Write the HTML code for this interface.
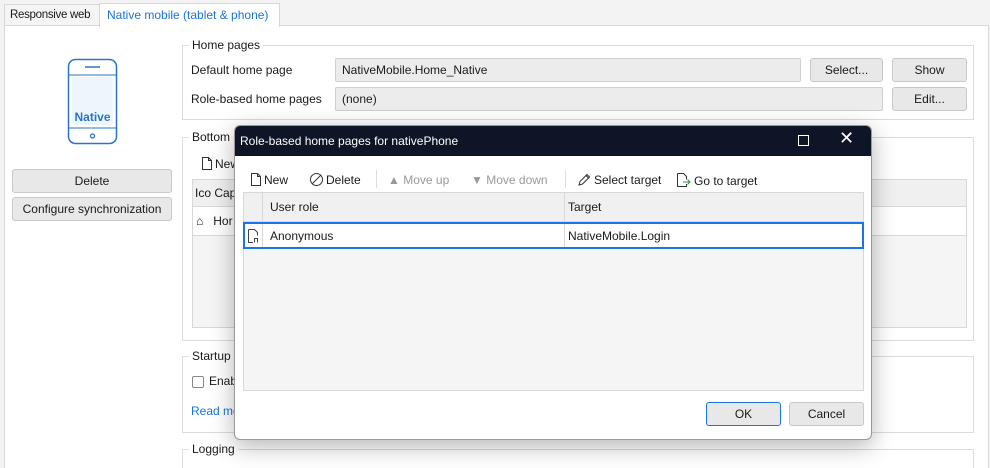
<!DOCTYPE html>
<html><head><style>
*{box-sizing:border-box;margin:0;padding:0}
html{width:990px;height:468px;overflow:hidden}
body{width:990px;height:468px;overflow:hidden;background:#f3f3f3;font-family:"Liberation Sans",sans-serif;font-size:12px;color:#1a1a1a;position:relative}
.a{position:absolute;white-space:nowrap}
.btn{position:absolute;background:#e8e8e8;border:1px solid #c8c8c8;border-radius:3px;text-align:center;line-height:22px;font-size:12px}
.inp{position:absolute;background:#ececec;border:1px solid #cfcfcf;border-radius:2px;padding-left:6px;line-height:22px}
.grp{position:absolute;border:1px solid #dcdcdc}
.gl{position:absolute;background:#fff;padding:0 3px;top:-8px;left:6px;line-height:14px;white-space:nowrap}
.g{color:#999}
svg.i{vertical-align:-2px;margin-right:3px}
</style></head><body>
<div class="a" style="left:4px;top:4px;width:96px;height:22px;background:#f5f5f5;border:1px solid #d8d8d8;line-height:20px;padding-left:5px;font-size:11.5px;letter-spacing:-0.3px">Responsive web</div>
<div class="a" style="left:4px;top:25px;width:985px;height:450px;background:#fff;border:1px solid #d8d8d8"></div>
<div class="a" style="left:99px;top:3px;width:181px;height:24px;background:#fff;border:1px solid #d8d8d8;border-bottom:none;line-height:22px;padding-left:7px;color:#1a73d9;font-size:12px">Native mobile (tablet &amp; phone)</div>
<svg class="a" style="left:67px;top:58px" width="52" height="88" viewBox="0 0 52 88"><rect x="1.5" y="1.5" width="48" height="84" rx="7" fill="#fff" stroke="#2a74c9" stroke-width="1.5"/><rect x="5" y="19" width="41" height="48" rx="2" fill="#eef6fd"/><line x1="1.5" y1="17" x2="49.5" y2="17" stroke="#2a74c9"/><line x1="1.5" y1="70" x2="49.5" y2="70" stroke="#2a74c9"/><line x1="18" y1="9" x2="33" y2="9" stroke="#2a74c9" stroke-width="1.5"/><circle cx="25.5" cy="78" r="2" fill="none" stroke="#2a74c9" stroke-width="1.3"/><text x="25.5" y="63" text-anchor="middle" font-family="Liberation Sans,sans-serif" font-size="12" font-weight="bold" fill="#2a74c9">Native</text></svg>
<div class="btn" style="left:12px;top:169px;width:160px;height:24px">Delete</div>
<div class="btn" style="left:12px;top:197px;width:160px;height:24px">Configure synchronization</div>
<div class="grp" style="left:182px;top:45px;width:792px;height:75px"><span class="gl">Home pages</span></div>
<div class="a" style="left:191px;top:63px">Default home page</div>
<div class="inp" style="left:335px;top:58px;width:466px;height:24px">NativeMobile.Home_Native</div>
<div class="btn" style="left:810px;top:58px;width:73px;height:24px">Select...</div>
<div class="btn" style="left:892px;top:58px;width:75px;height:24px">Show</div>
<div class="a" style="left:191px;top:92px">Role-based home pages</div>
<div class="inp" style="left:335px;top:87px;width:548px;height:24px">(none)</div>
<div class="btn" style="left:892px;top:87px;width:75px;height:24px">Edit...</div>
<div class="grp" style="left:182px;top:137px;width:792px;height:204px"><span class="gl">Bottom</span></div>
<div class="a" style="left:202px;top:157px"><svg class="i" width="10" height="13" viewBox="0 0 10 13"><path d="M.5 .5h6l3 3v9h-9z M6.5 .5v3h3" fill="none" stroke="#333"/></svg>New</div>
<div class="a" style="left:192px;top:179px;width:775px;height:149px;border:1px solid #d8d8d8;background:#f5f5f5"></div>
<div class="a" style="left:193px;top:180px;width:773px;height:27px;background:#f0f0f0;border-bottom:1px solid #d8d8d8;line-height:27px;padding-left:2px">Ico&nbsp;Cap</div>
<div class="a" style="left:193px;top:207px;width:773px;height:29px;background:#fff;border-bottom:1px solid #d8d8d8;line-height:28px;padding-left:3px">⌂&nbsp;&nbsp;&nbsp;Hor</div>
<div class="grp" style="left:182px;top:356px;width:792px;height:77px"><span class="gl">Startup</span></div>
<div class="a" style="left:192px;top:376px;width:12px;height:12px;border:1px solid #888;border-radius:2px"></div>
<div class="a" style="left:209px;top:374px">Enab</div>
<div class="a" style="left:191px;top:404px;color:#1a73d9">Read mo</div>
<div class="grp" style="left:182px;top:449px;width:792px;height:30px"><span class="gl">Logging</span></div>
<!-- dialog -->
<div class="a" style="left:234px;top:125px;width:638px;height:315px;background:#fff;border:1px solid #999;border-radius:6px;overflow:hidden;box-shadow:0 6px 24px rgba(0,0,0,.3)">
<div style="height:30px;background:#0d1526;color:#fff;line-height:30px;padding-left:5px">Role-based home pages for nativePhone</div>
<div class="a" style="left:563px;top:9px;width:11px;height:11px;border:1.3px solid #fff"></div>
<div class="a" style="left:604px;top:2px;color:#fff;font-size:18px">✕</div>
<div class="a" style="top:47px;left:16px"><svg class="i" width="10" height="13" viewBox="0 0 10 13"><path d="M.5 .5h6l3 3v9h-9z M6.5 .5v3h3" fill="none" stroke="#333"/></svg>New</div>
<div class="a" style="top:47px;left:75px"><svg class="i" width="13" height="13" viewBox="0 0 13 13"><circle cx="6.5" cy="6.5" r="6" fill="none" stroke="#333"/><path d="M2.5 10.5l8-8" stroke="#333"/></svg>Delete</div>
<div class="a" style="top:44px;left:141px;height:18px;border-left:1px solid #ddd"></div>
<div class="a g" style="top:47px;left:153px">▲ Move up</div>
<div class="a g" style="top:47px;left:236px">▼ Move down</div>
<div class="a" style="top:44px;left:330px;height:18px;border-left:1px solid #ddd"></div>
<div class="a" style="top:47px;left:343px"><svg class="i" width="13" height="13" viewBox="0 0 13 13"><path d="M1 12l1-3.5 7-7 2.5 2.5-7 7z M8 2.5l2.5 2.5" fill="none" stroke="#333"/></svg>Select target</div>
<div class="a" style="top:47px;left:442px"><svg class="i" width="14" height="14" viewBox="0 0 14 14"><path d="M.5 .5h6l3 3v3 M9.5 11v2.5h-9v-13" fill="none" stroke="#333"/><path d="M6 9h7M10.5 6.5 13 9l-2.5 2.5" fill="none" stroke="#2a9a3a"/></svg>Go to target</div>
<div class="a" style="left:8px;top:66px;width:621px;height:199px;background:#f5f5f5;border:1px solid #d8d8d8"></div>
<div class="a" style="left:9px;top:67px;width:619px;height:29px;background:#f0f0f0;border-bottom:1px solid #d8d8d8"></div>
<div class="a" style="left:27px;top:67px;height:29px;border-left:1px solid #d8d8d8"></div>
<div class="a" style="left:329px;top:67px;height:29px;border-left:1px solid #d8d8d8"></div>
<div class="a" style="left:35px;top:74px">User role</div>
<div class="a" style="left:333px;top:74px">Target</div>
<div class="a" style="left:8px;top:96px;width:621px;height:27px;background:#fff;border:2px solid #1a73e8"></div>
<div class="a" style="left:27px;top:98px;height:23px;border-left:1px solid #d8d8d8"></div>
<div class="a" style="left:329px;top:98px;height:23px;border-left:1px solid #d8d8d8"></div>
<svg class="a" style="left:13px;top:103px" width="11" height="14" viewBox="0 0 11 14"><path d="M.5 .5h6l3 3v3 M5 13.5h-4.5v-13" fill="none" stroke="#444"/><path d="M6.5 13.5v-4h3v4" fill="none" stroke="#444"/></svg>
<div class="a" style="left:35px;top:103px">Anonymous</div>
<div class="a" style="left:333px;top:103px">NativeMobile.Login</div>
<div class="btn" style="left:471px;top:276px;width:75px;height:24px;border-color:#1a73e8">OK</div>
<div class="btn" style="left:554px;top:276px;width:75px;height:24px">Cancel</div>
</div>
</body></html>
